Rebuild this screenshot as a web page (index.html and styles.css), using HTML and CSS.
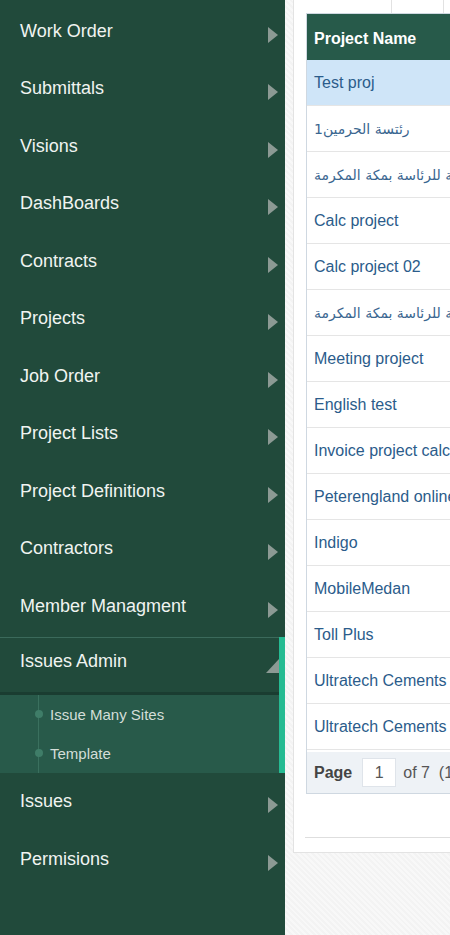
FILE: index.html
```html
<!DOCTYPE html>
<html lang="en">
<head>
<meta charset="utf-8">
<title>Projects</title>
<link rel="stylesheet" href="styles.css">
</head>
<body>
<div class="app">
  <nav class="sidebar">
    <div class="menu-item"><span>Work Order</span><span class="arrow"></span></div>
    <div class="menu-item"><span>Submittals</span><span class="arrow"></span></div>
    <div class="menu-item"><span>Visions</span><span class="arrow"></span></div>
    <div class="menu-item"><span>DashBoards</span><span class="arrow"></span></div>
    <div class="menu-item"><span>Contracts</span><span class="arrow"></span></div>
    <div class="menu-item"><span>Projects</span><span class="arrow"></span></div>
    <div class="menu-item"><span>Job Order</span><span class="arrow"></span></div>
    <div class="menu-item"><span>Project Lists</span><span class="arrow"></span></div>
    <div class="menu-item"><span>Project Definitions</span><span class="arrow"></span></div>
    <div class="menu-item"><span>Contractors</span><span class="arrow"></span></div>
    <div class="menu-item"><span>Member Managment</span><span class="arrow"></span></div>
    <div class="group">
      <div class="group-head"><span>Issues Admin</span><span class="corner"></span></div>
      <ul class="submenu">
        <li>Issue Many Sites</li>
        <li>Template</li>
      </ul>
      <span class="active-bar"></span>
    </div>
    <div class="menu-item after"><span>Issues</span><span class="arrow"></span></div>
    <div class="menu-item after"><span>Permisions</span><span class="arrow"></span></div>
  </nav>
  <main class="content">
    <div class="card">
      <div class="toolbar"><span class="tb-a"></span><span class="tb-b"></span></div>
      <div class="grid">
        <div class="grid-head"><div class="cell">Project Name</div></div>
        <div class="row selected"><div class="cell">Test proj</div></div>
        <div class="row"><div class="cell ar">رئتسة الحرمين1</div></div>
        <div class="row"><div class="cell ar">مشاريع الجهات التابعة للرئاسة بمكة المكرمة</div></div>
        <div class="row"><div class="cell">Calc project</div></div>
        <div class="row"><div class="cell">Calc project 02</div></div>
        <div class="row"><div class="cell ar">مشاريع الجهات التابعة للرئاسة بمكة المكرمة</div></div>
        <div class="row"><div class="cell">Meeting project</div></div>
        <div class="row"><div class="cell">English test</div></div>
        <div class="row"><div class="cell">Invoice project calc</div></div>
        <div class="row"><div class="cell">Peterengland online</div></div>
        <div class="row"><div class="cell">Indigo</div></div>
        <div class="row"><div class="cell">MobileMedan</div></div>
        <div class="row"><div class="cell">Toll Plus</div></div>
        <div class="row"><div class="cell">Ultratech Cements</div></div>
        <div class="row"><div class="cell">Ultratech Cements</div></div>
        <div class="pager">
          <span class="pg-label">Page</span>
          <span class="pg-input">1</span>
          <span class="pg-of">of 7&nbsp; (15 items)</span>
        </div>
      </div>
      <div class="card-footer"></div>
    </div>
  </main>
</div>
</body>
</html>
```
FILE: styles.css
```css
* { box-sizing: border-box; }
html, body { margin: 0; padding: 0; }
body {
  width: 450px;
  height: 935px;
  overflow: hidden;
  font-family: "Liberation Sans", Arial, sans-serif;
}
.app { display: flex; height: 935px; }

/* Sidebar */
.sidebar {
  width: 285px;
  flex: none;
  background: #214a3b;
  padding-top: 2.6px;
}
.menu-item {
  height: 57.5px;
  display: flex;
  align-items: center;
  justify-content: space-between;
  padding: 0 7px 0 20px;
  color: #f0f4f1;
  font-size: 18px;
}
.arrow {
  width: 0;
  height: 0;
  border-left: 10px solid #8c9a94;
  border-top: 8px solid transparent;
  border-bottom: 8px solid transparent;
  margin-top: 7px;
}
.group {
  position: relative;
  margin-top: 1.9px;
}
.group-head {
  height: 58px;
  border-top: 1px solid #3b6a5b;
  border-bottom: 3px solid #1a3d31;
  display: flex;
  justify-content: space-between;
  align-items: flex-start;
  padding: 0 6px 0 20px;
  line-height: 47px;
  font-size: 18px;
  color: #f0f4f1;
}
.corner {
  width: 0;
  height: 0;
  border-bottom: 14px solid #8c9a94;
  border-left: 13px solid transparent;
  margin-top: 21px;
}
.submenu {
  list-style: none;
  margin: 0;
  padding: 0;
  height: 78px;
  background: linear-gradient(#3a705e, #3a705e) 38px 0 / 1px 100% no-repeat, #285a4a;
}
.submenu li {
  height: 39px;
  display: flex;
  align-items: center;
  padding-left: 35px;
  font-size: 15px;
  color: #d3ded8;
}
.submenu li::before {
  content: "";
  width: 8px;
  height: 8px;
  border-radius: 50%;
  background: #3f7d68;
  margin-right: 7px;
}
.active-bar {
  position: absolute;
  top: 0;
  right: 0;
  bottom: 0;
  width: 6px;
  background: #25bb92;
}
.menu-item.after:first-of-type { margin-top: 0; }

/* Content */
.content {
  flex: 1;
  min-width: 0;
  overflow: hidden;
  padding-left: 8px;
  background: repeating-linear-gradient(45deg, #f3f3f3 0 2px, #f8f8f8 2px 4px);
}
.card {
  width: 420px;
  height: 853px;
  background: #fff;
  border-left: 1px solid #e3e3e3;
  border-bottom: 1px solid #e3e3e3;
  padding-left: 12px;
  overflow: hidden;
}
.toolbar {
  height: 13px;
  display: flex;
}
.tb-a { width: 86px; border-right: 1px solid #e2e2e2; }
.tb-b { width: 52px; border-right: 1px solid #e2e2e2; }

.grid {
  width: 400px;
  border: 1px solid #cfd8e1;
}
.grid-head {
  height: 46px;
  background: #275a4a;
  color: #fff;
  font-weight: bold;
  font-size: 16px;
  display: flex;
  align-items: center;
  padding-top: 4px;
}
.row {
  height: 46px;
  border-bottom: 1px solid #e5e5e5;
  display: flex;
  align-items: center;
  color: #2b5c8b;
  font-size: 16px;
}
.row.selected { background: #cfe5f8; }
.cell {
  width: 149px;
  flex: none;
  padding: 0 7px;
  white-space: nowrap;
}
.cell.ar {
  font-family: "DejaVu Sans", sans-serif;
  font-size: 14px;
  color: #3a6690;
}
.pager {
  height: 43px;
  background: #eef2f6;
  border-top: 2px solid #fff;
  display: flex;
  align-items: center;
  padding-left: 7px;
  font-size: 16px;
  color: #555;
  white-space: nowrap;
}
.pg-label { font-weight: bold; color: #444; }
.pg-input {
  width: 34px;
  height: 29px;
  margin-left: 10px;
  background: #fff;
  border: 1px solid #dfe4ea;
  display: flex;
  align-items: center;
  justify-content: center;
}
.pg-of { margin-left: 7px; }
.card-footer {
  margin-top: 43px;
  margin-left: -1px;
  border-top: 1px solid #dedede;
}
```
